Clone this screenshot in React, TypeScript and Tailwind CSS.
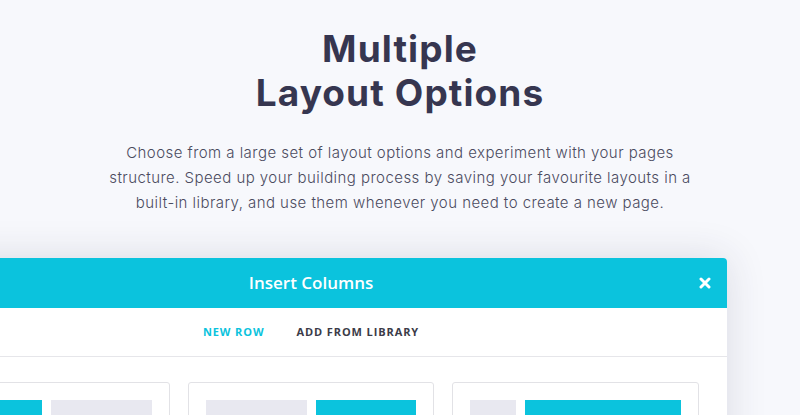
import React from "react"

const cards = [
  [
    { w: "w-1/2", cyan: true },
    { w: "w-1/2", cyan: false },
  ],
  [
    { w: "w-1/2", cyan: false },
    { w: "w-1/2", cyan: true },
  ],
  [
    { w: "w-[46px]", cyan: false },
    { w: "flex-1", cyan: true },
  ],
]

export default function App() {
  return (
    <div className="w-full h-[415px] overflow-hidden bg-[#f7f8fc] font-['Inter',sans-serif]">
      {/* Hero text */}
      <div className="flex flex-col items-center pt-[27px]">
        <h1 className="text-center text-[37px] leading-[44px] font-bold text-[#363650] tracking-[1.1px]">
          Multiple
          <br />
          Layout Options
        </h1>
        <p className="mt-[25px] w-[592px] text-center text-[15px] leading-[25px] text-[#4b4b5f] font-light tracking-[0.45px]">
          Choose from a large set of layout options and experiment with your pages structure. Speed up your
          building process by saving your favourite layouts in a built-in library, and use them whenever you need
          to create a new page.
        </p>
      </div>

      {/* Modal */}
      <div className="mt-[43px] ml-[-105px] w-[832px] bg-white rounded-t-[4px] shadow-[0_0_40px_rgba(40,40,80,0.14)]">
        <div className="relative h-[50px] bg-[#0bc3dd] rounded-t-[4px] flex items-center justify-center">
          <span className="font-['Open_Sans',sans-serif] font-semibold text-[17px] text-white">Insert Columns</span>
          <svg
            className="absolute right-[16px] top-[19px]"
            width="12"
            height="12"
            viewBox="0 0 12 12"
          >
            <path d="M2 2L10 10M10 2L2 10" stroke="white" strokeWidth="3" strokeLinecap="round" />
          </svg>
        </div>
        <div className="h-[49px] border-b border-[#e6e6ea] flex items-center justify-center gap-[32px] font-['Open_Sans',sans-serif] font-bold text-[11px] tracking-[0.9px]">
          <span className="text-[#0bc3dd]">NEW ROW</span>
          <span className="text-[#3b3b48]">ADD FROM LIBRARY</span>
        </div>
        <div className="flex gap-[18px] px-[28px] pt-[25px]">
          {cards.map((bars, i) => (
            <div key={i} className="w-[247px] h-[120px] border border-[#e2e2e6] rounded-[3px] p-[17px] flex gap-[9px]">
              {bars.map((b, j) => (
                <div key={j} className={`${b.w} h-[60px] ${b.cyan ? "bg-[#0bc3dd]" : "bg-[#e8e8f0]"}`} />
              ))}
            </div>
          ))}
        </div>
      </div>
    </div>
  )
}
